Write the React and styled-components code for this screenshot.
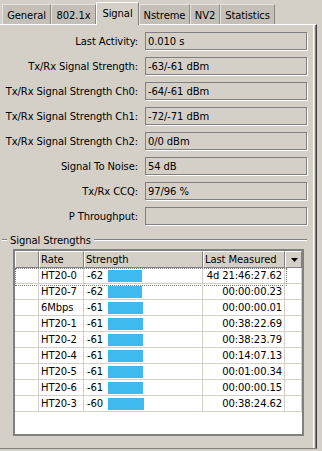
import React from 'react';
import styled, { createGlobalStyle, css } from 'styled-components';

const Global = createGlobalStyle`
  html, body { margin: 0; padding: 0; background: #d4d0c8; }
  body {
    font-family: "DejaVu Sans", "Liberation Sans", sans-serif;
    font-size: 10px;
    letter-spacing: -0.1px;
    color: #000;
  }
  * { box-sizing: border-box; }
`;

const Window = styled.div`
  width: 322px;
  height: 451px;
  background: #d4d0c8;
  overflow: hidden;
`;

const TabBar = styled.div`
  display: flex;
  align-items: flex-end;
  height: 24px;
  padding-left: 2px;
`;

const Tab = styled.div`
  width: ${(p) => p.$w}px;
  height: 20px;
  display: flex;
  align-items: center;
  justify-content: center;
  padding-top: 1px;
  background: #c4c0b8;
  border-top: 1px solid #e6e4de;
  border-left: 1px solid #e6e4de;
  border-right: 1px solid #8c8983;
  white-space: nowrap;
  ${(p) =>
    p.$active &&
    css`
      height: 23px;
      margin-bottom: -1px;
      background: #d4d0c8;
      position: relative;
      z-index: 1;
      border-top-color: #fff;
      border-left-color: #fff;
      border-right-color: #808080;
      padding-top: 0;
      padding-bottom: 2px;
    `}
`;

const Panel = styled.div`
  width: 317px;
  height: 425px;
  border-top: 1px solid #fff;
  border-right: 1px solid #404040;
  border-bottom: 1px solid #808080;
  box-shadow: inset -1px 0 0 #808080, inset -2px 0 0 #d4d0c8, inset -3px 0 0 #fff;
  padding-top: 7px;
`;

const Form = styled.div`
  display: flex;
  flex-direction: column;
  gap: 7px;
`;

const Row = styled.div`
  display: grid;
  grid-template-columns: 139px 162px;
  column-gap: 6px;
  align-items: center;
`;

const Label = styled.div`
  text-align: right;
  padding-right: 1px;
  white-space: nowrap;
`;

const Field = styled.div`
  height: 18px;
  border: 1px solid #808080;
  box-shadow: 1px 1px 0 #fff;
  padding-left: 2px;
  display: flex;
  align-items: center;
  white-space: nowrap;
`;

const GroupTitle = styled.div`
  display: flex;
  align-items: center;
  gap: 3px;
  margin-top: 8px;
  height: 14px;
  padding-left: 2px;
  width: 307px;
`;

const Etch = styled.span`
  flex: ${(p) => (p.$grow ? '1 1 auto' : '0 0 5px')};
  height: 2px;
  border-top: 1px solid #808080;
  border-bottom: 1px solid #fff;
`;

const Table = styled.div`
  margin: 2px 0 0 13px;
  width: 291px;
  height: 187px;
  border: 2px solid #808080;
  background: #fff;
`;

const COLS = '24px 45px 119px 82px 17px';

const HeaderRow = styled.div`
  display: grid;
  grid-template-columns: ${COLS};
  height: 17px;
`;

const HeadCell = styled.div`
  background: #d4d0c8;
  border-top: 1px solid #fff;
  border-left: 1px solid #fff;
  border-right: 1px solid #808080;
  border-bottom: 1px solid #808080;
  padding-left: 1px;
  display: flex;
  align-items: center;
  justify-content: ${(p) => (p.$center ? 'center' : 'flex-start')};
  white-space: nowrap;
  overflow: hidden;
`;

const DataRow = styled.div`
  position: relative;
  display: grid;
  grid-template-columns: ${COLS};
  height: 16px;
  ${(p) =>
    p.$focused &&
    css`
      &::after {
        content: '';
        position: absolute;
        left: 0;
        top: 0;
        width: 270px;
        height: 16px;
        border: 1px dotted #7a7a7a;
        pointer-events: none;
      }
    `}
`;

const Cell = styled.div`
  border-right: 1px solid #d4d0c8;
  border-bottom: 1px solid #d4d0c8;
  padding: 0 2px;
  display: flex;
  align-items: center;
  white-space: nowrap;
  overflow: hidden;
  justify-content: ${(p) => (p.$right ? 'flex-end' : 'flex-start')};
`;

const Value = styled.span`
  flex: 0 0 22px;
  padding-left: 1px;
`;

const Bar = styled.span`
  display: block;
  height: 12px;
  background: #3fbaee;
`;

const fields = [
  ['Last Activity:', '0.010 s'],
  ['Tx/Rx Signal Strength:', '-63/-61 dBm'],
  ['Tx/Rx Signal Strength Ch0:', '-64/-61 dBm'],
  ['Tx/Rx Signal Strength Ch1:', '-72/-71 dBm'],
  ['Tx/Rx Signal Strength Ch2:', '0/0 dBm'],
  ['Signal To Noise:', '54 dB'],
  ['Tx/Rx CCQ:', '97/96 %'],
  ['P Throughput:', ''],
];

const rows = [
  ['HT20-0', -62, '4d 21:46:27.62'],
  ['HT20-7', -62, '00:00:00.23'],
  ['6Mbps', -61, '00:00:00.01'],
  ['HT20-1', -61, '00:38:22.69'],
  ['HT20-2', -61, '00:38:23.79'],
  ['HT20-4', -61, '00:14:07.13'],
  ['HT20-5', -61, '00:01:00.34'],
  ['HT20-6', -61, '00:00:00.15'],
  ['HT20-3', -60, '00:38:24.62'],
];

const tabs = [
  ['General', 49],
  ['802.1x', 45],
  ['Signal', 43],
  ['Nstreme', 51],
  ['NV2', 30],
  ['Statistics', 55],
];

export default function App() {
  return (
    <Window>
      <Global />
      <TabBar>
        {tabs.map(([t, w]) => (
          <Tab key={t} $w={w} $active={t === 'Signal'}>
            {t}
          </Tab>
        ))}
      </TabBar>
      <Panel>
        <Form>
          {fields.map(([l, v]) => (
            <Row key={l}>
              <Label>{l}</Label>
              <Field>{v}</Field>
            </Row>
          ))}
        </Form>
        <GroupTitle>
          <Etch />
          <span>Signal Strengths</span>
          <Etch $grow />
        </GroupTitle>
        <Table>
          <HeaderRow>
            <HeadCell />
            <HeadCell>Rate</HeadCell>
            <HeadCell>Strength</HeadCell>
            <HeadCell>Last Measured</HeadCell>
            <HeadCell $center>
              <svg width="7" height="4" viewBox="0 0 7 4">
                <polygon points="0,0 7,0 3.5,4" fill="#000" />
              </svg>
            </HeadCell>
          </HeaderRow>
          {rows.map(([rate, s, t], i) => (
            <DataRow key={rate} $focused={i === 0}>
              <Cell />
              <Cell>{rate}</Cell>
              <Cell>
                <Value>{s}</Value>
                <Bar style={{ width: 34 + (62 + s) + 'px' }} />
              </Cell>
              <Cell $right>{t}</Cell>
              <Cell />
            </DataRow>
          ))}
        </Table>
      </Panel>
    </Window>
  );
}
